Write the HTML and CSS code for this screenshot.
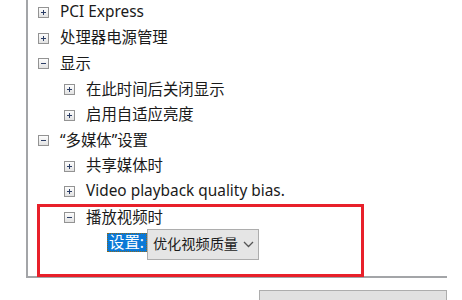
FILE: index.html
```html
<!DOCTYPE HTML>
<html lang="zh-CN">
<head>
    <meta charset="UTF-8">
    <title>电源选项 高级设置</title>
    <link rel="stylesheet" href="styles.css">
</head>
<body>
<div class="frame">
    <ul class="tree">
        <li class="row lv1"><span class="exp plus"></span>PCI Express</li>
        <li class="row lv1"><span class="exp plus"></span>处理器电源管理</li>
        <li class="row lv1"><span class="exp"></span>显示</li>
        <li class="row lv2"><span class="exp plus"></span>在此时间后关闭显示</li>
        <li class="row lv2"><span class="exp plus"></span>启用自适应亮度</li>
        <li class="row lv1"><span class="exp"></span>“多媒体”设置</li>
        <li class="row lv2"><span class="exp plus"></span>共享媒体时</li>
        <li class="row lv2"><span class="exp plus"></span>Video playback quality bias.</li>
    </ul>
    <!-- 红框标注 -->
    <div class="mark">
        <div class="row lv2 first"><span class="exp"></span>播放视频时</div>
        <div class="setRow">
            <span class="setLabel">设置:</span>
            <div class="select">
                <span class="selText">优化视频质量</span>
                <svg class="chev" width="11" height="7" viewBox="0 0 11 7"><path d="M1 1 L5.5 5.5 L10 1" fill="none" stroke="#555" stroke-width="1.3"/></svg>
            </div>
        </div>
    </div>
</div>
<div class="btn"></div>
</body>
</html>
```

FILE: styles.css
```css
*{
    box-sizing:border-box;
}
body{
    margin:0;
    padding:0;
    background:#fff;
    font-family:"Noto Sans","Noto Sans CJK SC",sans-serif;
    font-size:15.4px;
    color:#1a1a1a;
    overflow:hidden;
}
.frame{
    margin-left:26px;
    width:421px;
    border-left:2px solid #a3a5a8;
    border-bottom:2px solid #a3a5a8;
}
.tree{
    list-style:none;
    margin:0;
    padding:0;
}
.row{
    display:flex;
    align-items:center;
    height:25.6px;
    padding-bottom:3px;
    white-space:nowrap;
}
.lv1{
    padding-left:10px;
}
.lv2{
    padding-left:36px;
}
.exp{
    position:relative;
    width:11px;
    height:11px;
    border:1px solid #939393;
    background:linear-gradient(#fdfdfd,#e2e2e2);
    margin:3px 11px 0 0;
    flex:none;
}
.exp::before{
    content:'';
    position:absolute;
    left:2px;
    top:4px;
    width:5px;
    height:1px;
    background:#2c3e66;
}
.plus::after{
    content:'';
    position:absolute;
    left:4px;
    top:2px;
    width:1px;
    height:5px;
    background:#2c3e66;
}
.mark{
    position:relative;
    width:327px;
    margin:-1px 0 -1px 9px;
    padding-bottom:14px;
    border:3px solid #e8202a;
}
.mark .lv2{
    padding-left:24px;
}
.mark .first{
    height:22px;
}
.setRow{
    display:flex;
    align-items:center;
    height:31px;
    padding-left:67px;
}
.setLabel{
    height:19px;
    line-height:17px;
    padding:0 2px 0 1px;
    background:#0a78d6;
    color:#fff;
    border:1px dotted #8a6a1e;
    margin-top:-4px;
    white-space:nowrap;
}
.select{
    display:flex;
    align-items:center;
    justify-content:space-between;
    width:112px;
    height:31px;
    padding:0 4px 2px 5px;
    background:#e5e5e5;
    border:1px solid #adadad;
}
.selText{
    white-space:nowrap;
    font-size:14.2px;
}
.chev{
    flex:none;
    margin-top:3px;
}
.btn{
    margin:12px 0 0 259px;
    width:188px;
    height:10px;
    border:1px solid #adadad;
    border-bottom:none;
    background:#e1e1e1;
}
```
